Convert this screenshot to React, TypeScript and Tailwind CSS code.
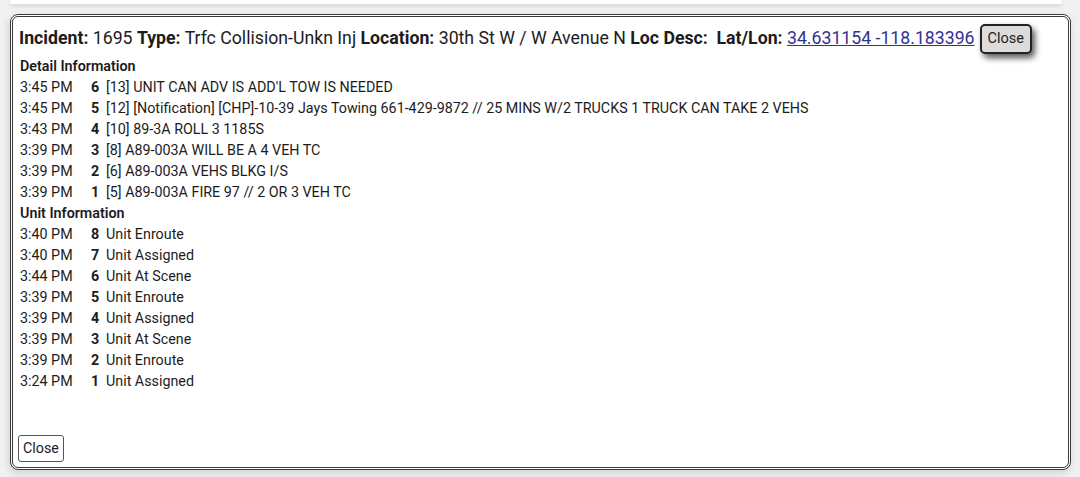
import React from "react";

const details: [string, string, string][] = [
  ["3:45 PM", "6", "[13] UNIT CAN ADV IS ADD'L TOW IS NEEDED"],
  ["3:45 PM", "5", "[12] [Notification] [CHP]-10-39 Jays Towing 661-429-9872 // 25 MINS W/2 TRUCKS 1 TRUCK CAN TAKE 2 VEHS"],
  ["3:43 PM", "4", "[10] 89-3A ROLL 3 1185S"],
  ["3:39 PM", "3", "[8] A89-003A WILL BE A 4 VEH TC"],
  ["3:39 PM", "2", "[6] A89-003A VEHS BLKG I/S"],
  ["3:39 PM", "1", "[5] A89-003A FIRE 97 // 2 OR 3 VEH TC"],
];

const units: [string, string, string][] = [
  ["3:40 PM", "8", "Unit Enroute"],
  ["3:40 PM", "7", "Unit Assigned"],
  ["3:44 PM", "6", "Unit At Scene"],
  ["3:39 PM", "5", "Unit Enroute"],
  ["3:39 PM", "4", "Unit Assigned"],
  ["3:39 PM", "3", "Unit At Scene"],
  ["3:39 PM", "2", "Unit Enroute"],
  ["3:24 PM", "1", "Unit Assigned"],
];

function Rows({ rows }: { rows: [string, string, string][] }) {
  return (
    <div className="grid grid-cols-[73px_15px_1fr] leading-[21px] text-[14.3px]">
      {rows.map(([t, n, d], i) => (
        <React.Fragment key={i}>
          <div className="pl-[2px] whitespace-nowrap">{t}</div>
          <div className="font-bold">{n}</div>
          <div className="whitespace-nowrap">{d}</div>
        </React.Fragment>
      ))}
    </div>
  );
}

export default function App() {
  return (
    <div
      className="h-[477px] w-[1080px] overflow-hidden bg-[#f1f1f1] text-[#1c1c1c]"
      style={{ fontFamily: "Roboto, 'Noto Sans', sans-serif" }}
    >
      <div className="ml-[10px] h-[4px] w-[1052px] bg-white shadow-[0_2px_4px_rgba(0,0,0,0.12)]" />
      <div className="ml-[10px] mt-[10px] flex h-[456px] w-[1061px] flex-col rounded-[8px] border-[3px] border-double border-[#3a3a3a] bg-white pb-[5px] pl-[5px] pt-[6px] shadow-[-1px_3px_8px_rgba(0,0,0,0.14)]">
        <div className="flex h-[31px] items-center text-[17.7px] whitespace-nowrap">
          <span className="pl-[1px]">
            <b className="font-bold">Incident:</b> 1695 <b className="font-bold">Type:</b> Trfc Collision-Unkn Inj{" "}
            <b className="font-bold">Location:</b> 30th St W / W Avenue N <b className="font-bold">Loc Desc:</b>
            {"\u00a0 "}
            <b className="font-bold">Lat/Lon:</b>{" "}
            <a className="text-[#33338f] underline">34.631154 -118.183396</a>
          </span>
          <button className="ml-[5px] h-[30px] rounded-[5px] border-2 border-[#222] bg-[#dcdcdc] px-[6px] text-[14.5px] shadow-[3px_4px_6px_rgba(0,0,0,0.65)]">
            Close
          </button>
        </div>
        <div className="mt-[2px] pl-[2px] text-[14.3px] font-semibold leading-[21px]">Detail Information</div>
        <Rows rows={details} />
        <div className="pl-[2px] text-[14.3px] font-semibold leading-[21px]">Unit Information</div>
        <Rows rows={units} />
        <div className="mt-auto">
          <button className="h-[27px] rounded-[3px] border border-[#555] bg-white px-[4px] text-[14.3px]">Close</button>
        </div>
      </div>
    </div>
  );
}
